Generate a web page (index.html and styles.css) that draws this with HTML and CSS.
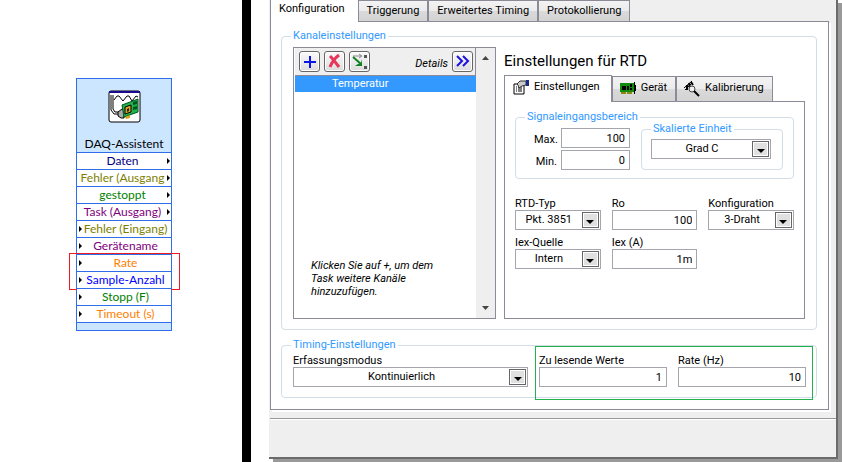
FILE: index.html
```
<!DOCTYPE html>
<html lang="de">
<head>
    <meta charset="UTF-8">
    <meta name="viewport" content="width=device-width, initial-scale=1.0">
    <title>DAQ-Assistent</title>
    <link rel="stylesheet" href="styles.css">
</head>
<body>
    <section class="diagram">
        <div class="node">
            <div class="node-head">
                <svg width="33" height="33" viewBox="0 0 33 33">
                    <rect x="1" y="1" width="31" height="31" rx="2" fill="#fff" stroke="#000"/>
                    <path d="M1 2h31" stroke="#1c0a8c" stroke-width="2"/>
                    <path d="M6 10l3-4 2 0 4 5 4-5 2 0 3 5 4-5 2 1" fill="none" stroke="#000"/>
                    <path d="M3 5v15l3 4h5M5 5v14l2 3h4" fill="none" stroke="#000"/>
                    <path d="M10 22l4-3 2 1v8h-3l-3-2z" fill="#aaa" stroke="#000"/>
                    <path d="M14 15l16-6v13l-14 5z" fill="#22b14c" stroke="#052"/>
                    <path d="M17 17l6-2v7l-6 2z" fill="#e0a020" stroke="#000"/>
                    <path d="M19 19l2-1v3l-2 1z" fill="#222"/>
                    <path d="M25 12l4-1v3l-4 1zM25 17l4-1v3l-4 1z" fill="#052"/>
                    <path d="M17 27l5-2v3l-4 1z" fill="#d9a21b"/>
                </svg>
                <div>DAQ-Assistent</div>
            </div>
            <div class="port out navy">Daten</div>
            <div class="port out olive">Fehler (Ausgang</div>
            <div class="port out green">gestoppt</div>
            <div class="port out purple">Task (Ausgang)</div>
            <div class="port in olive">Fehler (Eingang)</div>
            <div class="port in purple">Gerätename</div>
            <div class="marked">
                <div class="port in orange">Rate</div>
                <div class="port in blue">Sample-Anzahl</div>
            </div>
            <div class="port in green">Stopp (F)</div>
            <div class="port in orange">Timeout (s)</div>
            <div class="node-foot"></div>
        </div>
    </section>

    <main class="window">
        <nav class="tabs">
            <button class="tab active">Konfiguration</button>
            <button class="tab">Triggerung</button>
            <button class="tab">Erweitertes Timing</button>
            <button class="tab">Protokollierung</button>
        </nav>
        <div class="page">
            <fieldset class="group">
                <legend>Kanaleinstellungen</legend>
                <div class="channels">
                    <div class="list">
                        <div class="list-main">
                            <div class="toolbar">
                                <button class="tool" aria-label="Hinzufügen">
                                    <svg width="17" height="17" viewBox="0 0 17 17"><path d="M9 3v12M3 9h12" stroke="#0a14e6" stroke-width="2"/></svg>
                                </button>
                                <button class="tool" aria-label="Löschen">
                                    <svg width="17" height="17" viewBox="0 0 17 17"><path d="M4 3c3 3 6 7 9 11M13 2C9 5 6 9 4 14" fill="none" stroke="#e8355a" stroke-width="3"/></svg>
                                </button>
                                <button class="tool" aria-label="Ändern">
                                    <svg width="17" height="17" viewBox="0 0 17 17">
                                        <path d="M2 3h8M8 1l3 2-3 2" fill="none" stroke="#888"/>
                                        <path d="M2 4l8 7" stroke="#118022" stroke-width="2"/>
                                        <path d="M11 6v7H4l3-2 3-1z" fill="#118022"/>
                                        <path d="M13 2h3v3h-3zM13 13h3v3h-3z" fill="#555"/>
                                    </svg>
                                </button>
                                <span class="details">Details</span>
                                <button class="tool" aria-label="Details">
                                    <svg width="17" height="17" viewBox="0 0 17 17"><path d="M3 3l5 5-5 5M9 3l5 5-5 5" fill="none" stroke="#1a10e0" stroke-width="2"/></svg>
                                </button>
                            </div>
                            <div class="channel">Temperatur</div>
                            <p class="hint">Klicken Sie auf +, um dem Task weitere Kanäle hinzuzufügen.</p>
                        </div>
                        <div class="scrollbar">
                            <svg width="7" height="4" viewBox="0 0 7 4"><path d="M0 4l3.500-4L7 4z" fill="#444"/></svg>
                            <svg width="7" height="4" viewBox="0 0 7 4"><path d="M0 0h7L3.500 4z" fill="#444"/></svg>
                        </div>
                    </div>

                    <div class="settings">
                        <h1>Einstellungen für RTD</h1>
                        <nav class="subtabs">
                            <button class="tab active">
                                <svg width="17" height="15" viewBox="0 0 17 15">
                                    <path d="M1 4h10v10H1z" fill="#fff" stroke="#000"/>
                                    <path d="M3 7h1M5 7h4M3 9h1M5 9h4M3 11h1M5 11h4" stroke="#000"/>
                                    <path d="M4 4l3-3h6v4l-4 1-3 2-1-3z" fill="#ccc" stroke="#333"/>
                                    <path d="M13 0h3v6h-3z" fill="#1c2a8c"/>
                                </svg>
                                Einstellungen
                            </button>
                            <button class="tab">
                                <svg width="17" height="13" viewBox="0 0 17 13">
                                    <path d="M0 1h14v9H0z" fill="#118a11"/>
                                    <path d="M1 10h5v2H1zM7 10h5v2H7z" fill="#8a8a10"/>
                                    <path d="M2 4h4v4H2zM7 4h2v4H7zM10 2h2v3h-2zM10 6h2v2h-2zM14 0h1v12h-1zM15 3h1v6h-1z" fill="#000"/>
                                </svg>
                                Gerät
                            </button>
                            <button class="tab">
                                <svg width="17" height="17" viewBox="0 0 17 17">
                                    <path d="M0 8L8 1M1 10l7-7" fill="none" stroke="#000"/>
                                    <path d="M3 5v5M5 3l1 5M7 2l2 3" fill="none" stroke="#000" stroke-width="2"/>
                                    <circle cx="8" cy="9" r="3" fill="#eee" stroke="#444"/>
                                    <path d="M10 11l5 5" stroke="#000" stroke-width="2"/>
                                </svg>
                                Kalibrierung
                            </button>
                        </nav>
                        <div class="subpage">
                            <fieldset class="group range">
                                <legend>Signaleingangsbereich</legend>
                                <div class="limits">
                                    <label for="max">Max.</label>
                                    <input type="text" id="max" value="100">
                                    <label for="min">Min.</label>
                                    <input type="text" id="min" value="0">
                                </div>
                                <fieldset class="group unit">
                                    <legend>Skalierte Einheit</legend>
                                    <div class="combo">
                                        <select aria-label="Skalierte Einheit"><option>Grad C</option></select>
                                        <span class="arrow"></span>
                                    </div>
                                </fieldset>
                            </fieldset>
                            <div class="fields">
                                <div class="field">
                                    <label for="rtd-type">RTD-Typ</label>
                                    <div class="combo">
                                        <select id="rtd-type"><option>Pkt. 3851</option></select>
                                        <span class="arrow"></span>
                                    </div>
                                </div>
                                <div class="field">
                                    <label for="ro">Ro</label>
                                    <input type="text" id="ro" value="100">
                                </div>
                                <div class="field">
                                    <label for="wiring">Konfiguration</label>
                                    <div class="combo">
                                        <select id="wiring"><option>3-Draht</option></select>
                                        <span class="arrow"></span>
                                    </div>
                                </div>
                                <div class="field">
                                    <label for="iex-source">Iex-Quelle</label>
                                    <div class="combo">
                                        <select id="iex-source"><option>Intern</option></select>
                                        <span class="arrow"></span>
                                    </div>
                                </div>
                                <div class="field">
                                    <label for="iex">Iex (A)</label>
                                    <input type="text" id="iex" value="1m">
                                </div>
                            </div>
                        </div>
                    </div>
                </div>
            </fieldset>

            <fieldset class="group timing">
                <legend>Timing-Einstellungen</legend>
                <div class="timing-row">
                    <div class="field mode">
                        <label for="mode">Erfassungsmodus</label>
                        <div class="combo">
                            <select id="mode"><option>Kontinuierlich</option></select>
                            <span class="arrow"></span>
                        </div>
                    </div>
                    <div class="sampling">
                        <div class="field">
                            <label for="samples">Zu lesende Werte</label>
                            <input type="text" id="samples" value="1">
                        </div>
                        <div class="field">
                            <label for="rate">Rate (Hz)</label>
                            <input type="text" id="rate" value="10">
                        </div>
                    </div>
                </div>
            </fieldset>
        </div>
        <footer class="footer"></footer>
    </main>
</body>
</html>
```
FILE: styles.css
```
* { box-sizing: border-box; }
body { margin: 0; min-height: 100vh; display: flex; background: #fff; color: #000; font: 11px/14px Roboto, sans-serif; }
button, input, select { font: inherit; color: inherit; margin: 0; }

/* block diagram */
.diagram { flex: 0 0 251px; border-right: 9px solid #000; padding: 78px 70px 0 76px; }
.node { border: 1px solid #2f6ee8; background: #cce6ff; font: 12px/16px Lato, sans-serif; text-align: center; }
.node-head { height: 73px; padding-top: 11px; }
.node-head svg { display: block; margin: 0 auto 13px; }
.port { position: relative; height: 17px; border-top: 1px solid #2f6ee8; background: #fff; white-space: nowrap; }
.port::after { content: ""; position: absolute; top: 5px; border: 3px solid transparent; border-right-width: 0; border-left-color: #000; }
.out { padding-right: 3px; }
.in { padding-left: 3px; }
.out::after { right: 1px; }
.in::after { left: 2px; }
.node-foot { height: 8px; border-top: 1px solid #2f6ee8; }
.marked { position: relative; }
.marked::after { content: ""; position: absolute; inset: -1px -9px -2px -8px; border: 1px solid #ed1c24; }
.navy { color: #000080; }
.olive { color: #808000; }
.green { color: #008000; }
.purple { color: #800080; }
.orange { color: #ff8000; }
.blue { color: #0000ff; }

/* dialog */
.window { flex: 1; min-width: 0; display: flex; flex-direction: column; margin: 0 4px 3px 18px; padding-left: 1px; background: #efefef; border: solid #6b6b6b; border-width: 0 2px 2px 0; box-shadow: 4px 3px 0 #999; }
.tabs, .subtabs { display: flex; align-items: flex-end; }
.tab { height: 21px; padding: 0 8px; border: 1px solid #8c8a96; border-bottom: 0; background: linear-gradient(#f3f3f3, #ebebeb 50%, #dadada 50%, #d3d3d3); white-space: nowrap; }
.tabs .tab.active { height: 22px; margin-bottom: -1px; padding: 0 13px 4px 8px; border-top: 0; border-right: 0; }
.tab.active { background: #fff; position: relative; }
.page { margin-right: 7px; padding: 7px 11px 11px 10px; background: #fff; border: 1px solid #8c8a96; box-shadow: 2px 2px 0 #fff; }
.footer { flex: 1; min-height: 39px; margin-top: 8px; border-top: 1px solid #999; box-shadow: inset 0 1px 0 #fff; }

.group { min-width: 0; margin: 0; padding: 4px 11px 10px; border: 1px solid #d2dde6; border-radius: 4px; }
.group legend { margin-left: -2px; padding: 0 2px; color: #3399ff; line-height: 14px; }
.channels { display: flex; gap: 8px; }

.list { flex: 0 0 203px; height: 272px; display: flex; border: 1px solid #8c8a96; }
.list-main { flex: 1; display: flex; flex-direction: column; padding-left: 1px; }
.toolbar { height: 28px; display: flex; align-items: center; gap: 4px; padding: 0 2px 0 4px; background: #efefef; border-bottom: 1px solid #8c8a96; border-right: 1px solid #8c8a96; }
.tool { width: 21px; height: 21px; padding: 0; border: 1px solid #666; border-radius: 3px; background: linear-gradient(#fafafa, #dcdcdc); box-shadow: inset 0 0 0 1px #fff; }
.tool svg { display: block; margin: 1px; }
.details { margin-left: auto; padding-top: 4px; font-style: italic; }
.channel { height: 16px; padding-left: 37px; line-height: 16px; background: #3399ff; color: #fff; }
.hint { width: 130px; margin: auto 0 20px 16px; font-style: italic; line-height: 13px; }
.scrollbar { width: 19px; display: flex; flex-direction: column; justify-content: space-between; align-items: center; padding: 8px 0; background: #efefef; }

.settings { flex: 1; min-width: 0; display: flex; flex-direction: column; }
h1 { margin: 4px 0; font-size: 15px; line-height: 20px; font-weight: normal; }
.subtabs .tab { display: flex; align-items: center; gap: 4px; height: 25px; padding: 0 8px 2px 7px; }
.subtabs .tab.active { height: 27px; margin-bottom: -1px; padding: 0 11px 4px 8px; }
.subpage { flex: 1; padding: 8px 10px 10px; border: 1px solid #8c8a96; }
.range { display: flex; padding: 0 10px 8px 18px; }
.range > legend { margin-left: -9px; }
.limits { flex: 1; display: grid; grid-template-columns: 23px 1fr; column-gap: 4px; row-gap: 2px; padding-top: 4px; align-items: end; }
.limits label { text-align: right; line-height: 16px; }
.unit { flex: 0 0 142px; margin: -2px 0 0 11px; padding: 3px 11px 8px 9px; }
.unit > legend { margin-left: 0; }

input { width: 100%; min-width: 0; height: 20px; padding: 0 4px; border: 1px solid #a5a5ad; background: #fff; text-align: right; }
.combo { display: flex; align-items: center; height: 20px; padding-right: 1px; border: 1px solid #a5a5ad; background: #fff; }
.combo select { flex: 1; min-width: 0; height: 18px; padding: 0; border: 0; background: none; appearance: none; text-align: center; text-align-last: center; }
.arrow { flex: 0 0 17px; height: 16px; display: flex; align-items: center; justify-content: center; border: 1px solid #666; background: #e0e0e0; box-shadow: inset 0 0 0 1px #fff; }
.arrow::after { content: ""; margin-top: 3px; border: 4px solid transparent; border-bottom-width: 0; border-top-color: #000; }

.fields { display: grid; grid-template-columns: repeat(3, 1fr); gap: 5px 11px; margin-top: 17px; }
.field { min-width: 0; }
.field label { display: block; padding-top: 2px; line-height: 12px; white-space: nowrap; }

.timing { margin-top: 8px; padding: 1px 10px 10px 11px; }
.timing-row { display: flex; gap: 11px; }
.mode { flex: 235; }
.sampling { position: relative; flex: 267; display: flex; gap: 11px; }
.sampling .field { flex: 1; }
.sampling::after { content: ""; position: absolute; inset: -7px -7px -13px -4px; border: 1px solid #22b14c; pointer-events: none; }
```
